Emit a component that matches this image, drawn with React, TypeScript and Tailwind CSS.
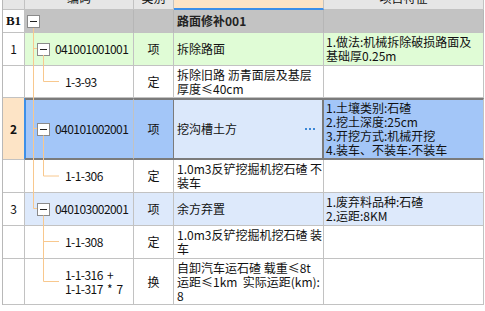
const font = { fontFamily: '"Noto Sans CJK SC", "Liberation Sans", sans-serif' }

const MinusBox = () => (
  <div className="flex h-[13px] w-[13px] shrink-0 items-center justify-center border border-[#8a8a8a] bg-white">
    <div className="h-px w-[7px] bg-[#222]" />
  </div>
)

const Dots = () => (
  <div className="flex gap-[2px]">
    <div className="h-[2px] w-[2px] bg-[#3b87d6]" />
    <div className="h-[2px] w-[2px] bg-[#3b87d6]" />
    <div className="h-[2px] w-[2px] bg-[#3b87d6]" />
  </div>
)

type Row = {
  no?: string
  code: string[]
  parent: boolean
  kind: string
  name: string[]
  feat: string[]
  h: string
  tone: 'green' | 'white' | 'pale' | 'sel'
}

const rows: Row[] = [
  { no: '1', code: ['041001001001'], parent: true, kind: '项', name: ['拆除路面'], feat: ['1.做法:机械拆除破损路面及', '基础厚0.25m'], h: 'h-[33px]', tone: 'green' },
  { code: ['1-3-93'], parent: false, kind: '定', name: ['拆除旧路 沥青面层及基层', '厚度≤40cm'], feat: [], h: 'h-[32px]', tone: 'white' },
  { no: '2', code: ['040101002001'], parent: true, kind: '项', name: ['挖沟槽土方'], feat: ['1.土壤类别:石碴', '2.挖土深度:25cm', '3.开挖方式:机械开挖', '4.装车、不装车:不装车'], h: 'h-[62px]', tone: 'sel' },
  { code: ['1-1-306'], parent: false, kind: '定', name: ['1.0m3反铲挖掘机挖石碴 不', '装车'], feat: [], h: 'h-[33px]', tone: 'white' },
  { no: '3', code: ['040103002001'], parent: true, kind: '项', name: ['余方弃置'], feat: ['1.废弃料品种:石碴', '2.运距:8KM'], h: 'h-[33px]', tone: 'pale' },
  { code: ['1-1-308'], parent: false, kind: '定', name: ['1.0m3反铲挖掘机挖石碴 装', '车'], feat: [], h: 'h-[33px]', tone: 'white' },
  { code: ['1-1-316\u00a0\u00a0+', '1-1-317\u00a0\u00a0*\u00a0\u00a07'], parent: false, kind: '换', name: ['自卸汽车运石碴 载重≤8t', '运距≤1km\u00a0\u00a0实际运距(km):', '8'], feat: [], h: 'h-[46px]', tone: 'white' },
]

const bgOf = {
  green: 'bg-[#e0fcd6]',
  white: 'bg-white',
  pale: 'bg-[#dde9fb]',
  sel: 'bg-[#a3c6f8]',
}

const Lines = ({ lines }: { lines: string[] }) => (
  <div className="whitespace-nowrap leading-[14px]">
    {lines.map((l, i) => (
      <div key={i}>{l}</div>
    ))}
  </div>
)

const TableRow = ({ r }: { r: Row }) => {
  const sel = r.tone === 'sel'
  const bg = bgOf[r.tone]
  const edge = sel ? 'border-t-2 border-b-2 border-t-[#7b7b7b] border-b-[#7b7b7b]' : 'border-b border-b-[#c2c2c2]'
  return (
    <div className={`grid grid-cols-[22px_109px_40px_150px_160px] ${r.h}`}>
      <div
        className={`flex items-center justify-center border-r border-b border-b-[#c2c2c2] ${
          sel ? 'border-r-[#3d8fe8] bg-[#fde4c6] font-bold' : 'border-r-[#c2c2c2] bg-white'
        }`}
      >
        {r.no}
      </div>
      <div
        className={`flex items-center border-r border-r-[#c2c2c2] ${edge} ${bg} ${
          sel ? 'shadow-[inset_1px_0_0_#3d8fe8]' : ''
        } ${r.parent ? 'gap-[5px] pl-[12px]' : 'pl-[40px]'}`}
      >
        {r.parent && <MinusBox />}
        <div className="tracking-[-0.55px]">
          <Lines lines={r.code} />
        </div>
      </div>
      <div
        className={`flex items-center justify-center border-r ${edge} ${bg} ${
          sel ? 'border-r-[#7b7b7b]' : 'border-r-[#c2c2c2]'
        }`}
      >
        {r.kind}
      </div>
      <div
        className={`flex items-center justify-between pl-[3px] ${edge} ${
          sel ? 'border-r-2 border-r-[#7b7b7b] bg-[#dbe8fb] pr-[7px]' : `border-r border-r-[#c2c2c2] ${bg}`
        }`}
      >
        <Lines lines={r.name} />
        {sel && <Dots />}
      </div>
      <div className={`flex items-center border-r border-r-[#c2c2c2] pl-[2px] ${edge} ${bg}`}>
        <Lines lines={r.feat} />
      </div>
    </div>
  )
}

const Tree = () => (
  <svg className="pointer-events-none absolute top-0 left-0" width="485" height="311">
    <g stroke="#f8c88e" strokeWidth="1" fill="none">
      <path d="M33.5 28V208.5" />
      <path d="M33.5 48.5H37M33.5 128.5H37M33.5 208.5H37" />
      <path d="M43.5 55V81.5H59" />
      <path d="M43.5 135.5V176H59" />
      <path d="M43.5 215.5V281.5H59M43.5 241.5H59" />
    </g>
  </svg>
)

export default function App() {
  return (
    <div className="relative h-[311px] w-[485px] overflow-hidden bg-white text-[12px] text-[#111]" style={font}>
      <div className="ml-[2px] w-[482px] border-l border-l-[#b8b8b8]">
        {/* header, scrolled mostly out of view */}
        <div className="grid h-[10px] grid-cols-[22px_109px_40px_150px_160px] overflow-hidden">
          <div className="border-r border-b border-[#c2c2c2] bg-[#e6e6e6]" />
          <div className="flex justify-center border-r border-b border-[#c2c2c2] bg-[#e6e6e6]">
            <span className="-mt-[8px] leading-[12px]">编码</span>
          </div>
          <div className="flex justify-center border-r border-b border-[#c2c2c2] bg-[#e6e6e6]">
            <span className="-mt-[8px] leading-[12px]">类别</span>
          </div>
          <div className="border-r border-r-[#c2c2c2] border-b-2 border-b-[#3d8fe8] bg-[#fde4c6]" />
          <div className="flex justify-center border-r border-b border-[#c2c2c2] bg-[#e6e6e6]">
            <span className="-mt-[8px] leading-[12px]">项目特征</span>
          </div>
        </div>

        {/* B1 group row */}
        <div className="grid h-[23px] grid-cols-[22px_109px_40px_150px_160px]">
          <div
            className="flex items-center justify-center border-r border-b border-[#c2c2c2] bg-white text-[13px] font-bold"
            style={{ fontFamily: '"Liberation Serif", serif' }}
          >
            B1
          </div>
          <div className="flex items-center border-r border-b border-r-[#b6b6b6] border-b-[#c2c2c2] bg-[#c3c3c3] pl-[2px]">
            <MinusBox />
          </div>
          <div className="border-r border-b border-r-[#b6b6b6] border-b-[#c2c2c2] bg-[#c3c3c3]" />
          <div className="flex items-center border-r border-b border-r-[#b6b6b6] border-b-[#c2c2c2] bg-[#c3c3c3] pl-[3px] font-bold text-[#222]">
            路面修补001
          </div>
          <div className="border-r border-b border-r-[#b6b6b6] border-b-[#c2c2c2] bg-[#c3c3c3]" />
        </div>

        {rows.map((r, i) => (
          <TableRow key={i} r={r} />
        ))}
      </div>
      <Tree />
    </div>
  )
}
